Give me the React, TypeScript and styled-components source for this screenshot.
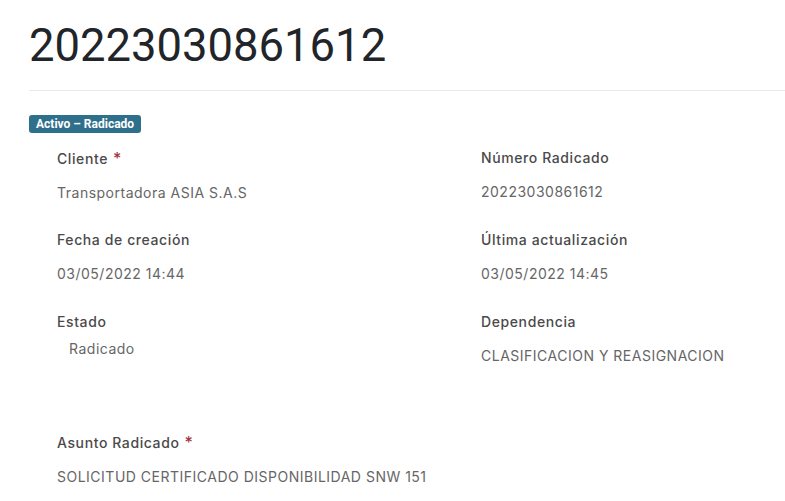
import React from 'react';
import styled, { createGlobalStyle } from 'styled-components';

const GlobalStyle = createGlobalStyle`
  body {
    margin: 0;
    background: #fff;
    font-family: Inter, "Noto Sans", sans-serif;
  }
`;

interface iField {
  label: string;
  value: string;
  required?: boolean;
  indent?: boolean;
}

const left: iField[] = [
  { label: 'Cliente', value: 'Transportadora ASIA S.A.S', required: true },
  { label: 'Fecha de creación', value: '03/05/2022 14:44' },
  { label: 'Estado', value: 'Radicado', indent: true },
];

const right: iField[] = [
  { label: 'Número Radicado', value: '20223030861612' },
  { label: 'Última actualización', value: '03/05/2022 14:45' },
  { label: 'Dependencia', value: 'CLASIFICACION Y REASIGNACION' },
];

const Field = ({ label, value, required, indent }: iField) => (
  <FieldWrap>
    <Label>
      {label}
      {required && <Star>*</Star>}
    </Label>
    <Value $indent={indent}>{value}</Value>
  </FieldWrap>
);

const App = () => {
  return (
    <>
      <GlobalStyle />
      <Sheet>
        <Title>20223030861612</Title>
        <Divider />
        <Badge>Activo – Radicado</Badge>
        <Columns>
          <Column>
            {left.map(f => (
              <Field key={f.label} {...f} />
            ))}
          </Column>
          <Column>
            {right.map(f => (
              <Field key={f.label} {...f} />
            ))}
          </Column>
        </Columns>
        <Subject>
          <Field
            label="Asunto Radicado"
            value="SOLICITUD CERTIFICADO DISPONIBILIDAD SNW 151"
            required
          />
        </Subject>
      </Sheet>
    </>
  );
};

export default App;

const Sheet = styled.div`
  padding: 18px 0 0 29px;
`;

const Title = styled.h1`
  margin: 0;
  font-family: Roboto, sans-serif;
  font-weight: 400;
  font-size: 45.4px;
  line-height: 56px;
  color: #212529;
`;

const Divider = styled.hr`
  margin: 16px 0 21px;
  border: 0;
  border-top: 1px solid #e7e9ed;
`;

const Badge = styled.span`
  display: inline-block;
  padding: 0 7px;
  border-radius: 3px;
  background: #2e6f8c;
  color: #fff;
  font-family: Roboto, sans-serif;
  font-size: 12px;
  font-weight: 700;
  line-height: 18px;
`;

const Columns = styled.div`
  display: grid;
  grid-template-columns: 424px 1fr;
  padding-left: 28px;
  margin-top: 15px;
`;

const Column = styled.div`
  display: flex;
  flex-direction: column;
`;

const FieldWrap = styled.div`
  height: 82px;
`;

const Label = styled.div`
  font-size: 14px;
  font-weight: 500;
  letter-spacing: 0.6px;
  color: #4a4a4a;
  line-height: 20px;
`;

const Star = styled.span`
  color: #a0363b;
  margin-left: 5px;
  font-size: 16px;
`;

const Value = styled.div<{ $indent?: boolean }>`
  margin-top: ${p => (p.$indent ? '7px' : '14px')};
  padding-left: ${p => (p.$indent ? '12px' : '0')};
  font-size: 14px;
  letter-spacing: 0.5px;
  color: #666;
  line-height: 20px;
`;

const Subject = styled.div`
  padding-left: 28px;
  margin-top: 38px;
`;
